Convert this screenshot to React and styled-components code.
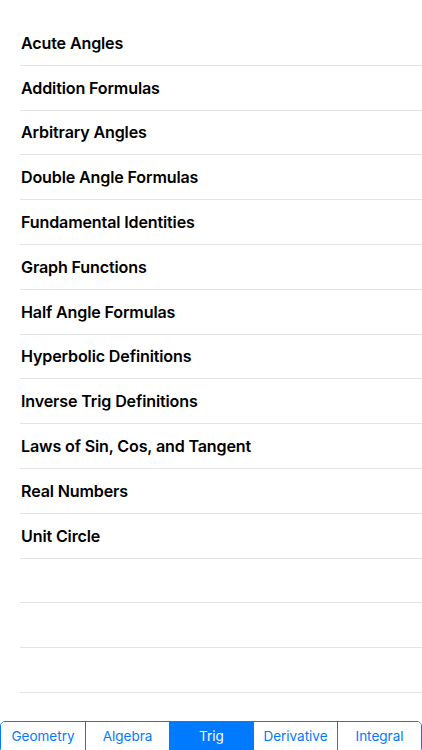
import React, { useState } from "react";
import styled, { createGlobalStyle } from "styled-components";

const GlobalStyle = createGlobalStyle`
  html, body {
    margin: 0;
    padding: 0;
    background: #ffffff;
    font-family: "Inter", "Roboto", "Liberation Sans", sans-serif;
    -webkit-font-smoothing: antialiased;
  }
`;

const topics = [
  "Acute Angles",
  "Addition Formulas",
  "Arbitrary Angles",
  "Double Angle Formulas",
  "Fundamental Identities",
  "Graph Functions",
  "Half Angle Formulas",
  "Hyperbolic Definitions",
  "Inverse Trig Definitions",
  "Laws of Sin, Cos, and Tangent",
  "Real Numbers",
  "Unit Circle",
  "",
  "",
  "",
];

const tabs = ["Geometry", "Algebra", "Trig", "Derivative", "Integral"];

const Screen = styled.div`
  width: 422px;
  height: 750px;
  display: flex;
  flex-direction: column;
  overflow: hidden;
  background: #fff;
`;

const List = styled.ul`
  list-style: none;
  margin: 0;
  padding: 21px 0 0 20px;
  flex: 1;
`;

const Row = styled.li`
  height: 44.8px;
  box-sizing: border-box;
  display: flex;
  align-items: center;
  padding: 0 0 0 1px;
  border-bottom: 1px solid #e3e3e6;
  font-size: 16.1px;
  font-weight: 600;
  color: #000;
  letter-spacing: -0.15px;
`;

const Segments = styled.div`
  display: grid;
  grid-template-columns: repeat(5, 1fr);
  box-sizing: border-box;
  height: 32px;
  margin-bottom: -3px;
  border: 1px solid #007aff;
  border-radius: 5px;
  overflow: hidden;
  flex-shrink: 0;
`;

const Segment = styled.button`
  border: none;
  border-left: ${(p) => (p.$first ? "none" : "1px solid #007aff")};
  background: ${(p) => (p.$active ? "#007aff" : "#fff")};
  color: ${(p) => (p.$active ? "#fff" : "#007aff")};
  font-family: inherit;
  font-size: 13.5px;
  padding: 0 0 2px;
  cursor: pointer;
`;

export default function App() {
  const [active, setActive] = useState(2);
  return (
    <>
      <GlobalStyle />
      <Screen>
        <List>
          {topics.map((t, i) => (
            <Row key={i}>{t}</Row>
          ))}
        </List>
        <Segments>
          {tabs.map((t, i) => (
            <Segment
              key={t}
              $first={i === 0}
              $active={i === active}
              onClick={() => setActive(i)}
            >
              {t}
            </Segment>
          ))}
        </Segments>
      </Screen>
    </>
  );
}
